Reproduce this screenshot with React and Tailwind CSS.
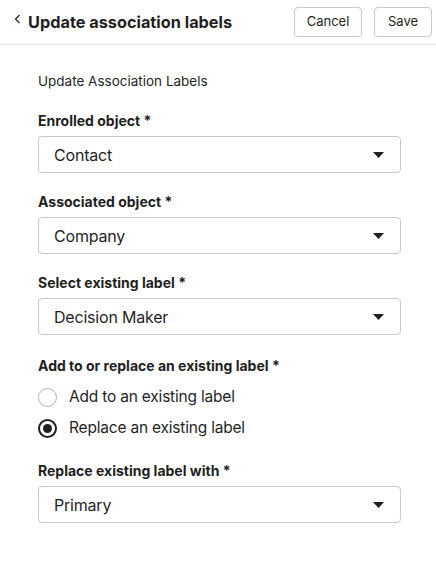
import React from "react";

function Caret() {
  return (
    <svg width="11" height="6" viewBox="0 0 11 6" className="shrink-0">
      <path d="M0 0 H11 L5.5 6 Z" fill="#1f1f1f" />
    </svg>
  );
}

function Select({ label, value }) {
  return (
    <div className="flex flex-col">
      <div className="text-[14px] leading-[20px] font-bold text-[#1f1f1f]">{label}</div>
      <div className="mt-[5px] h-[37px] flex items-center justify-between border border-[#c9c9c9] rounded-[4px] pl-[15px] pr-[16px] bg-white">
        <span className="text-[16px] tracking-[-0.2px] text-[#1f1f1f]">{value}</span>
        <Caret />
      </div>
    </div>
  );
}

function Radio({ checked, label }) {
  return (
    <div className="flex items-center gap-[12px] h-[20px]">
      {checked ? (
        <span className="w-[19px] h-[19px] rounded-full border-2 border-[#1f1f1f] flex items-center justify-center">
          <span className="w-[9px] h-[9px] rounded-full bg-[#1f1f1f]" />
        </span>
      ) : (
        <span className="w-[19px] h-[19px] rounded-full border border-[#b5b5b5]" />
      )}
      <span className="text-[15.5px] tracking-[-0.2px] text-[#1f1f1f]">{label}</span>
    </div>
  );
}

export default function App() {
  return (
    <div className="w-[436px] h-[564px] bg-white overflow-hidden" style={{ fontFamily: "Inter, 'Noto Sans', sans-serif" }}>
      <div className="h-[45px] flex items-center border-b border-[#e3e3e3] pl-[14px] pr-[4px]">
        <svg width="7" height="10" viewBox="0 0 7 10" className="mb-[6px]">
          <path d="M5.5 1 L1.5 5 L5.5 9" fill="none" stroke="#1f1f1f" strokeWidth="1.2" />
        </svg>
        <div className="ml-[7px] text-[16.3px] font-bold text-[#1f1f1f]">Update association labels</div>
        <div className="ml-auto flex gap-[12px]">
          <button className="h-[30px] w-[68px] border border-[#c9c9c9] rounded-[4px] text-[13px] text-[#1f1f1f]">Cancel</button>
          <button className="h-[30px] w-[58px] border border-[#c9c9c9] rounded-[4px] text-[13px] text-[#1f1f1f]">Save</button>
        </div>
      </div>
      <div className="pl-[38px] pr-[35px] pt-[26px] flex flex-col">
        <div className="text-[13.5px] leading-[20px] text-[#1f1f1f]">Update Association Labels</div>
        <div className="mt-[20px] flex flex-col gap-[19px]">
          <Select label="Enrolled object *" value="Contact" />
          <Select label="Associated object *" value="Company" />
          <Select label="Select existing label *" value="Decision Maker" />
        </div>
        <div className="mt-[21px] text-[14px] leading-[20px] font-bold text-[#1f1f1f]">Add to or replace an existing label *</div>
        <div className="mt-[11px] flex flex-col gap-[11px]">
          <Radio label="Add to an existing label" />
          <Radio checked label="Replace an existing label" />
        </div>
        <div className="mt-[23px]">
          <Select label="Replace existing label with *" value="Primary" />
        </div>
      </div>
    </div>
  );
}
